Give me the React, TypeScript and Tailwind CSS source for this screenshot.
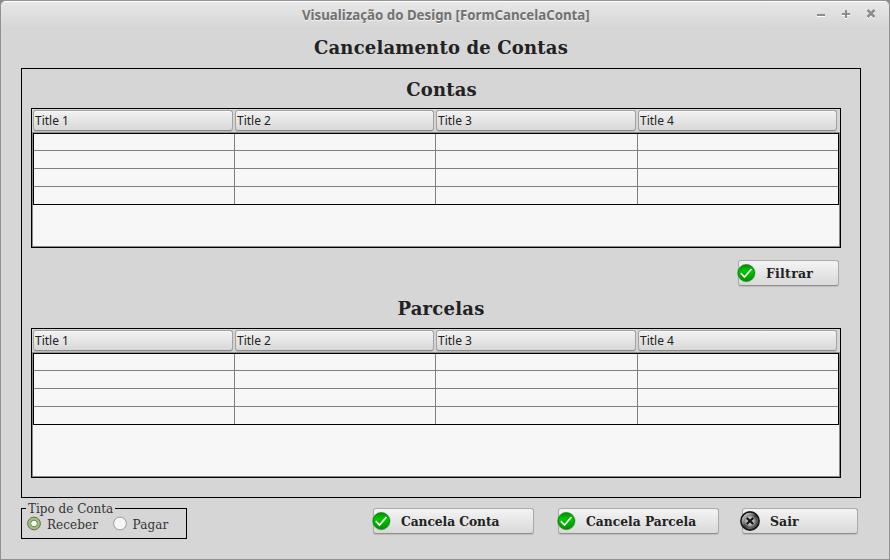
import React from "react";

const serif = "font-['DejaVu_Serif','Liberation_Serif',serif]";
const sans = "font-['Noto_Sans','Open_Sans',sans-serif]";

function GridTable({ height }: { height: string }) {
  return (
    <div className={`ml-[9px] flex w-[810px] flex-col border border-black bg-[#f7f7f7] ${height}`}>
      <div className="flex h-6 shrink-0 border-b border-[#8e8e8e] bg-[#d6d6d6]">
        {["w-[202px]", "w-[201px]", "w-[202px]", "w-[201px]"].map((w, i) => (
          <div key={i} className={`${w} shrink-0 pt-px pl-px`}>
            <div
              className={`${sans} mr-px flex h-[21px] items-center rounded-[3px] border border-[#a2a2a2] border-b-[#8c8c8c] bg-linear-to-b from-[#f2f2f2] to-[#d8d8d8] pl-px text-[12px] leading-none text-[#222] shadow-[0_1px_1px_#bcbcbc,inset_0_1px_0_#fafafa]`}
            >
              Title {i + 1}
            </div>
          </div>
        ))}
      </div>
      <div className="flex-1 border border-t-0 border-[#8a8a8a]">
        <div className="grid h-[72px] grid-cols-[201px_201px_202px_200px] grid-rows-[17px_18px_18px_17px] border border-black">
          {Array.from({ length: 16 }, (_, i) => (
            <div
              key={i}
              className={`border-[#808080] ${i % 4 < 3 ? "border-r" : ""} ${i < 12 ? "border-b" : ""}`}
            />
          ))}
        </div>
      </div>
    </div>
  );
}

function CheckIcon() {
  return (
    <svg width="20" height="20" viewBox="0 0 20 20" className="shrink-0">
      <defs>
        <linearGradient id="green" x1="0" y1="0" x2="0" y2="1">
          <stop offset="0" stopColor="#009400" />
          <stop offset=".4" stopColor="#00c800" />
          <stop offset="1" stopColor="#009000" />
        </linearGradient>
      </defs>
      <circle cx="10.3" cy="10" r="9.3" fill="#6fae6f" opacity=".6" />
      <circle cx="10.3" cy="10" r="8.2" fill="url(#green)" stroke="#087f08" strokeWidth=".9" />
      <path d="M4.8 10.2 8.5 14 15.5 6" fill="none" stroke="#fff" strokeWidth="1.7" />
    </svg>
  );
}

function CloseIcon() {
  return (
    <svg width="20" height="20" viewBox="0 0 20 20" className="shrink-0">
      <defs>
        <linearGradient id="metal" x1="0" y1="0" x2="1" y2="1">
          <stop offset="0" stopColor="#f0f0f0" />
          <stop offset=".3" stopColor="#a0a0a0" />
          <stop offset=".5" stopColor="#3c3c3c" />
          <stop offset=".7" stopColor="#666" />
          <stop offset="1" stopColor="#222" />
        </linearGradient>
        <radialGradient id="disc">
          <stop offset="0" stopColor="#d8d8d8" />
          <stop offset=".6" stopColor="#b0b0b0" />
          <stop offset="1" stopColor="#666" stopOpacity="0" />
        </radialGradient>
      </defs>
      <circle cx="10" cy="10" r="9.1" fill="url(#metal)" stroke="#161616" strokeWidth="1.6" />
      <circle cx="10" cy="10" r="7" fill="url(#disc)" />
      <path d="m6.8 7 6.4 6m0-6-6.4 6" stroke="#111" strokeWidth="2.2" />
    </svg>
  );
}

function ActionButton({ label, className, close = false }: { label: string; className: string; close?: boolean }) {
  return (
    <button
      className={`${serif} flex h-[26px] items-center rounded-[3px] border border-[#aaa] border-b-[#8f8f8f] bg-linear-to-b from-[#f4f4f4] to-[#d9d9d9] leading-none font-bold text-[#222] shadow-[0_1px_1px_#bdbdbd] ${className}`}
    >
      <span className="mr-[10px] -ml-[3px]">{close ? <CloseIcon /> : <CheckIcon />}</span>
      <span className="pt-[2px] whitespace-nowrap">{label}</span>
    </button>
  );
}

function Radio({ label, on = false }: { label: string; on?: boolean }) {
  return (
    <label className="flex h-[15px] items-center gap-[6px]">
      <svg width="14" height="15" viewBox="0 0 14 15">
        <circle cx="7" cy="7.5" r="6.4" fill={on ? "#9fc078" : "#f6f6f6"} stroke={on ? "#657052" : "#999"} />
        {on && <circle cx="7" cy="7.5" r="3.3" fill="#fff" stroke="#6c8650" />}
      </svg>
      <span className="pt-[2px] tracking-[0.08px]">{label}</span>
    </label>
  );
}

export default function App() {
  return (
    <div className="h-[560px] w-[890px] overflow-hidden bg-[#8b8b8b]">
      <div className="flex h-[560px] w-[890px] flex-col overflow-hidden rounded-t-[6px] border border-[#929292] bg-[#d6d6d6]">
        <header className="flex h-[27px] shrink-0 items-center border-t border-white bg-linear-to-b from-[#e8e8e8] to-[#d6d6d6]">
          <h1 className={`${sans} ml-[301px] w-[509px] pt-px text-[13.27px] leading-none font-bold whitespace-nowrap text-[#717171] [text-shadow:0_1px_0_#f2f2f2]`}>
            Visualização do Design [FormCancelaConta]
          </h1>
          <svg width="70" height="26" viewBox="0 0 70 26" fill="none">
            <g stroke="#fff" strokeWidth="2" transform="translate(0 1)">
              <path d="M6 13h8M31 12h8m-4-4v8" />
              <path d="m56.5 8 7 7m0-7-7 7" strokeWidth="2.6" />
            </g>
            <path d="M6 13h8M31 12h8m-4-4v8" stroke="#8d8d8d" strokeWidth="2" />
            <path d="m56.5 8 7 7m0-7-7 7" stroke="#8d8d8d" strokeWidth="2.6" />
          </svg>
        </header>
        <h2 className={`${serif} mt-[8px] mr-[8px] h-[24px] text-center text-[18px] leading-[24px] font-bold tracking-[0.18px] text-[#222]`}>
          Cancelamento de Contas
        </h2>
        <main className="mt-[8px] ml-5 flex h-[430px] w-[840px] shrink-0 flex-col border border-black">
          <h3 className={`${serif} mt-[9px] mb-[6px] h-[24px] pl-px text-center text-[18px] leading-[24px] font-bold tracking-[0.18px] text-[#222]`}>Contas</h3>
          <GridTable height="h-[140px]" />
          <ActionButton label="Filtrar" className="mt-[12px] mr-[21px] w-[101px] self-end text-[12.5px] tracking-[0.25px]" />
          <h3 className={`${serif} mt-[11px] mb-[7px] h-[24px] text-center text-[18px] leading-[24px] font-bold tracking-[0.25px] text-[#222]`}>Parcelas</h3>
          <GridTable height="h-[150px]" />
        </main>
        <footer className="ml-5 flex pt-[2px]">
          <fieldset className={`${serif} h-[39px] w-[166px] border border-black pl-[5px] text-[12px] leading-none text-[#333]`}>
            <legend className="-ml-px h-[17px] px-[2px] pt-px leading-[17px]">Tipo de Conta</legend>
            <div className="-mt-px flex gap-[14.5px]">
              <Radio label="Receber" on />
              <Radio label="Pagar" />
            </div>
          </fieldset>
          <ActionButton label="Cancela Conta" className="mt-[8px] ml-[186px] w-[161px] text-[12.3px] tracking-[-0.08px]" />
          <ActionButton label="Cancela Parcela" className="mt-[8px] ml-[24px] w-[161px] text-[12.3px]" />
          <ActionButton label="Sair" close className="mt-[8px] ml-[23px] w-[116px] text-[12.5px]" />
        </footer>
      </div>
    </div>
  );
}
